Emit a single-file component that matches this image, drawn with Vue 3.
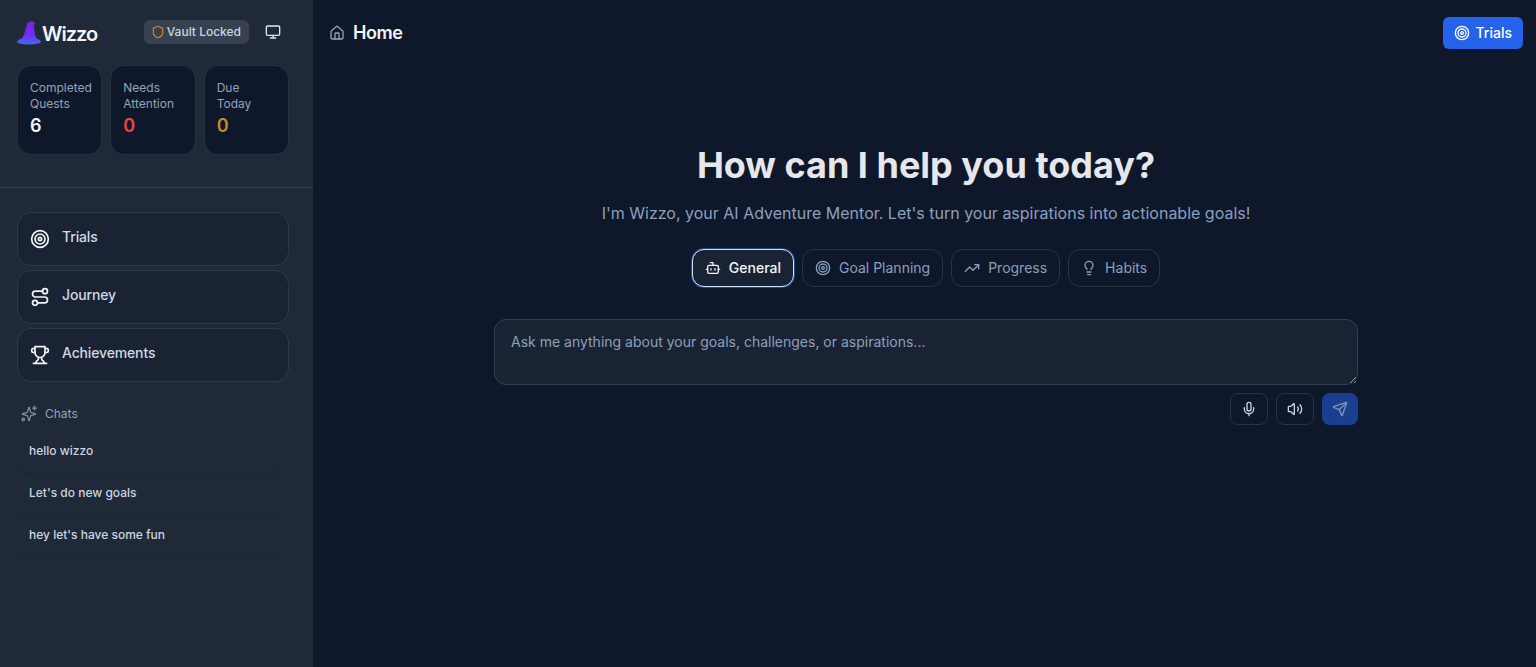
<template>
  <div class="app">
    <aside class="sidebar">
      <div class="top">
        <div class="brand">
          <svg class="hat" viewBox="0 0 24 24" width="24" height="24">
            <defs>
              <linearGradient id="hatFill" x1="0" y1="0" x2="0" y2="1">
                <stop offset="0" stop-color="#7c22e8" />
                <stop offset="0.6" stop-color="#6d2ff0" />
                <stop offset="1" stop-color="#3f6cf0" />
              </linearGradient>
            </defs>
            <path fill="url(#hatFill)" d="M10.5 2C12 .8 14 0 15.5 0L19 3.2 16.8 3.6C17 8 17.8 13 19 17 21 18 24 19.3 24 20.8 24 22.5 18 23.5 12 23.5 6 23.5 0 22.5 0 20.8 0 19.3 3 18 5.5 17 7.5 13 9 7 10.5 2Z" />
          </svg>
          <span class="brand-name">Wizzo</span>
        </div>
        <div class="vault">
          <svg viewBox="0 0 24 24" width="14" height="14" fill="none" stroke="#d08a2a" stroke-width="2" stroke-linecap="round" stroke-linejoin="round">
            <path d="M20 13c0 5-3.5 7.5-7.7 8.9a1 1 0 0 1-.6 0C7.5 20.5 4 18 4 13V6a1 1 0 0 1 1-1c2 0 4.5-1.2 6.2-2.7a1.2 1.2 0 0 1 1.6 0C14.5 3.8 17 5 19 5a1 1 0 0 1 1 1z" />
          </svg>
          <span>Vault Locked</span>
        </div>
        <svg class="monitor" viewBox="0 0 24 24" width="16" height="16" fill="none" stroke="#e2e8f0" stroke-width="2" stroke-linecap="round" stroke-linejoin="round">
          <rect x="2" y="3" width="20" height="14" rx="2" />
          <path d="M8 21h8M12 17v4" />
        </svg>
      </div>

      <div class="stats">
        <div v-for="s in stats" :key="s.label" class="stat">
          <div class="stat-label">{{ s.label }}</div>
          <div class="stat-value" :class="s.tone">{{ s.value }}</div>
        </div>
      </div>

      <div class="divider"></div>

      <nav class="nav">
        <a class="nav-item">
          <svg viewBox="0 0 24 24" width="20" height="20" class="ico"><circle cx="12" cy="12" r="10" /><circle cx="12" cy="12" r="6" /><circle cx="12" cy="12" r="2" /></svg>
          <span>Trials</span>
        </a>
        <a class="nav-item">
          <svg viewBox="0 0 24 24" width="20" height="20" class="ico"><circle cx="6" cy="19" r="3" /><path d="M9 19h8.5a3.5 3.5 0 0 0 0-7h-11a3.5 3.5 0 0 1 0-7H15" /><circle cx="18" cy="5" r="3" /></svg>
          <span>Journey</span>
        </a>
        <a class="nav-item">
          <svg viewBox="0 0 24 24" width="20" height="20" class="ico"><path d="M6 9H4.5a2.5 2.5 0 0 1 0-5H6" /><path d="M18 9h1.5a2.5 2.5 0 0 0 0-5H18" /><path d="M4 22h16" /><path d="M10 14.66V17c0 .55-.47.98-.97 1.21C7.85 18.75 7 20.24 7 22" /><path d="M14 14.66V17c0 .55.47.98.97 1.21C16.15 18.75 17 20.24 17 22" /><path d="M18 2H6v7a6 6 0 0 0 12 0V2Z" /></svg>
          <span>Achievements</span>
        </a>
      </nav>

      <div class="chats-head">
        <svg viewBox="0 0 24 24" width="18" height="18" fill="none" stroke="#8490a3" stroke-width="1.8" stroke-linecap="round" stroke-linejoin="round">
          <path d="M9.9 15.5A2 2 0 0 0 8.5 14.1L2.4 12.5a.5.5 0 0 1 0-1L8.5 9.9A2 2 0 0 0 9.9 8.5l1.600-6.100a.5.5 0 0 1 1 0l1.600 6.100a2 2 0 0 0 1.400 1.400l6.100 1.600a.5.5 0 0 1 0 1l-6.100 1.600a2 2 0 0 0-1.400 1.400l-1.600 6.100a.5.5 0 0 1-1 0z" transform="translate(.3 2.9) scale(.87)" />
          <path d="M18 3v5M20.5 5.500h-5" />
          <circle cx="3" cy="20.400" r="1.600" />
        </svg>
        <span>Chats</span>
      </div>
      <ul class="chats">
        <li v-for="c in chats" :key="c">{{ c }}</li>
      </ul>
    </aside>

    <main class="main">
      <header class="header">
        <div class="crumb">
          <svg viewBox="0 0 24 24" width="16" height="16" fill="none" stroke="#94a3b8" stroke-width="2" stroke-linecap="round" stroke-linejoin="round">
            <path d="M15 21v-8a1 1 0 0 0-1-1h-4a1 1 0 0 0-1 1v8" />
            <path d="M3 10a2 2 0 0 1 .7-1.5l7-6a2 2 0 0 1 2.6 0l7 6a2 2 0 0 1 .7 1.5v9a2 2 0 0 1-2 2H5a2 2 0 0 1-2-2z" />
          </svg>
          <span>Home</span>
        </div>
        <button class="trials-btn">
          <svg viewBox="0 0 24 24" width="16" height="16" fill="none" stroke="#fff" stroke-width="2"><circle cx="12" cy="12" r="10" /><circle cx="12" cy="12" r="6" /><circle cx="12" cy="12" r="2" /></svg>
          Trials
        </button>
      </header>

      <section class="hero">
        <h1>How can I help you today?</h1>
        <p>I'm Wizzo, your AI Adventure Mentor. Let's turn your aspirations into actionable goals!</p>

        <div class="tabs">
          <button class="tab active">
            <svg viewBox="0 0 24 24" width="16" height="16" class="tab-ico"><path d="M12 8V4H8" /><rect x="4" y="8" width="16" height="12" rx="2" /><path d="M2 14h2M20 14h2M15 13v2M9 13v2" /></svg>
            General
          </button>
          <button class="tab">
            <svg viewBox="0 0 24 24" width="16" height="16" class="tab-ico"><circle cx="12" cy="12" r="10" /><circle cx="12" cy="12" r="6" /><circle cx="12" cy="12" r="2" /></svg>
            Goal Planning
          </button>
          <button class="tab">
            <svg viewBox="0 0 24 24" width="16" height="16" class="tab-ico"><path d="M22 7 13.5 15.5 8.5 10.5 2 17" /><path d="M16 7h6v6" /></svg>
            Progress
          </button>
          <button class="tab">
            <svg viewBox="0 0 24 24" width="16" height="16" class="tab-ico"><path d="M15 14c.2-1 .7-1.700 1.500-2.500 1-.9 1.500-2.200 1.500-3.500A6 6 0 0 0 6 8c0 1 .2 2.200 1.500 3.500.7.7 1.300 1.500 1.500 2.500" /><path d="M9 18h6M10 22h4" /></svg>
            Habits
          </button>
        </div>

        <div class="composer">
          <textarea placeholder="Ask me anything about your goals, challenges, or aspirations..."></textarea>
          <div class="actions">
            <button class="act">
              <svg viewBox="0 0 24 24" width="16" height="16" class="act-ico"><path d="M12 2a3 3 0 0 0-3 3v7a3 3 0 0 0 6 0V5a3 3 0 0 0-3-3Z" /><path d="M19 10v2a7 7 0 0 1-14 0v-2" /><path d="M12 19v3" /></svg>
            </button>
            <button class="act">
              <svg viewBox="0 0 24 24" width="16" height="16" class="act-ico"><path d="M11 4.700a.7.7 0 0 0-1.200-.5L6.400 7.600A1.400 1.400 0 0 1 5.400 8H3a1 1 0 0 0-1 1v6a1 1 0 0 0 1 1h2.400a1.400 1.400 0 0 1 1 .4l3.400 3.400a.7.7 0 0 0 1.200-.5z" /><path d="M16 9a5 5 0 0 1 0 6" /><path d="M19.400 18.400a9 9 0 0 0 0-12.800" /></svg>
            </button>
            <button class="send">
              <svg viewBox="0 0 24 24" width="16" height="16" fill="none" stroke="#7f93b8" stroke-width="2" stroke-linecap="round" stroke-linejoin="round"><path d="M14.500 21.700a.5.5 0 0 0 .9 0l6.500-19a.5.5 0 0 0-.6-.6l-19 6.500a.5.5 0 0 0 0 .9l7.900 3.200a2 2 0 0 1 1.100 1.100z" /><path d="M21.900 2.100 10.900 13.100" /></svg>
            </button>
          </div>
        </div>
      </section>
    </main>
  </div>
</template>

<script setup>
const stats = [
  { label: 'Completed Quests', value: 6, tone: 'white' },
  { label: 'Needs Attention', value: 0, tone: 'red' },
  { label: 'Due Today', value: 0, tone: 'amber' }
]

const chats = ['hello wizzo', "Let's do new goals", "hey let's have some fun"]
</script>

<style>
html, body {
  margin: 0;
  background: #0f172a;
}
</style>

<style scoped>
.app {
  display: flex;
  height: 100vh;
  overflow: hidden;
  font-family: Inter, "Liberation Sans", sans-serif;
  background: #0f172a;
}

.sidebar {
  width: 313px;
  flex-shrink: 0;
  box-sizing: border-box;
  background: #1f2937;
}

.top {
  display: flex;
  align-items: center;
  height: 65px;
  padding: 0 24px 0 17px;
}

.brand {
  display: flex;
  align-items: center;
  flex: 1;
}

.hat {
  display: block;
}

.brand-name {
  margin-left: 1px;
  padding-top: 2px;
  font-size: 20px;
  font-weight: 600;
  letter-spacing: -1px;
  color: #f1f5f9;
}

.vault {
  display: flex;
  align-items: center;
  gap: 2px;
  height: 24px;
  padding: 0 8px 0 7px;
  margin-right: 16px;
  border-radius: 6px;
  background: #374151;
  color: #cbd5e1;
  font-size: 12px;
  font-weight: 500;
  transform: translateY(-1px);
}

.monitor {
  margin-right: 8px;
  transform: translateY(-1px);
}

.stats {
  display: grid;
  grid-template-columns: repeat(3, minmax(0, 1fr));
  gap: 8px;
  padding: 0 24px 0 17px;
}

.stat {
  height: 90px;
  box-sizing: border-box;
  padding: 14px 12px 0;
  border: 1px solid #263244;
  border-radius: 14px;
  background: #0f172a;
}

.stat-label {
  font-size: 12px;
  line-height: 16px;
  color: #94a3b8;
}

.stat-value {
  font-size: 18px;
  font-weight: 600;
  line-height: 28px;
}

.white { color: #f1f5f9; }
.red { color: #ef4444; }
.amber { color: #ca8a2a; }

.divider {
  height: 1px;
  margin-top: 32px;
  background: #374151;
}

.nav {
  display: flex;
  flex-direction: column;
  gap: 4px;
  margin: 24px 24px 0 17px;
}

.nav-item {
  display: flex;
  align-items: center;
  gap: 12px;
  height: 54px;
  box-sizing: border-box;
  padding: 0 12px;
  border: 1px solid #2d3a4d;
  border-radius: 14px;
  background: #1a2333;
  color: #d1d8e2;
  font-size: 14px;
  font-weight: 500;
  letter-spacing: -0.15px;
}

.nav-item span {
  transform: translateY(-3px);
}

.ico {
  fill: none;
  stroke: #f1f5f9;
  stroke-width: 2;
  stroke-linecap: round;
  stroke-linejoin: round;
}

.chats-head {
  display: flex;
  align-items: center;
  gap: 6px;
  margin: 23px 0 0 21px;
  height: 16px;
  font-size: 12px;
  color: #94a3b8;
}

.chats {
  list-style: none;
  margin: 11px 32px 0 17px;
  padding: 0;
}

.chats li {
  height: 42px;
  box-sizing: border-box;
  padding: 11px 0 0 12px;
  border-bottom: 1px solid #1c2533;
  border-radius: 12px;
  font-size: 12px;
  line-height: 16px;
  font-weight: 500;
  color: #cbd5e1;
}

.main {
  flex: 1;
  min-width: 0;
  padding-left: 3px;
}

.header {
  display: flex;
  align-items: center;
  justify-content: space-between;
  height: 65px;
  padding: 0 13px;
}

.crumb {
  display: flex;
  align-items: center;
  gap: 8px;
  font-size: 18px;
  font-weight: 600;
  letter-spacing: -0.45px;
  color: #f1f5f9;
}

.trials-btn {
  display: flex;
  align-items: center;
  gap: 6px;
  height: 32px;
  padding: 0 11px;
  border: 0;
  border-radius: 6px;
  background: #2563eb;
  color: #fff;
  font-family: inherit;
  font-size: 14px;
  font-weight: 500;
}

.hero {
  display: flex;
  flex-direction: column;
  align-items: center;
  padding-top: 75px;
}

h1 {
  margin: 0;
  font-size: 36px;
  line-height: 50px;
  font-weight: 700;
  color: #e5e7eb;
}

p {
  margin: 11px 0 0;
  font-size: 16px;
  line-height: 24px;
  color: #8ba0bd;
}

.tabs {
  display: flex;
  gap: 8px;
  margin-top: 24px;
}

.tab {
  display: flex;
  align-items: center;
  gap: 8px;
  height: 38px;
  padding: 0 12px 1px;
  border: 1px solid #283548;
  border-radius: 12px;
  background: transparent;
  color: #8ba0bd;
  font-family: inherit;
  font-size: 14px;
  font-weight: 400;
}

.tab.active {
  border-color: #cfe3fb;
  box-shadow: 0 0 0 1px rgba(59, 130, 246, 0.45);
  background: #1a2333;
  color: #f1f5f9;
  font-weight: 500;
}

.tab-ico {
  fill: none;
  stroke: currentColor;
  stroke-width: 2;
  stroke-linecap: round;
  stroke-linejoin: round;
}

.composer {
  width: 864px;
  margin-top: 32px;
}

textarea {
  display: block;
  width: 100%;
  height: 66px;
  box-sizing: border-box;
  padding: 12px 16px;
  border: 1px solid #334155;
  border-radius: 12px;
  background: #1a2333;
  color: #e2e8f0;
  font-family: inherit;
  font-size: 14px;
  line-height: 20px;
  outline: none;
}

textarea::placeholder {
  color: #8ba0bd;
  opacity: 1;
}

.actions {
  display: flex;
  justify-content: flex-end;
  gap: 8px;
  margin-top: 8px;
}

.act,
.send {
  display: flex;
  align-items: center;
  justify-content: center;
  height: 32px;
  padding: 0;
  border-radius: 8px;
}

.act {
  width: 38px;
  border: 1px solid #283548;
  background: #0f172a;
}

.send {
  width: 36px;
  border: 0;
  background: #1a3f8f;
}

.act-ico {
  fill: none;
  stroke: #cbd5e1;
  stroke-width: 2;
  stroke-linecap: round;
  stroke-linejoin: round;
}
</style>
